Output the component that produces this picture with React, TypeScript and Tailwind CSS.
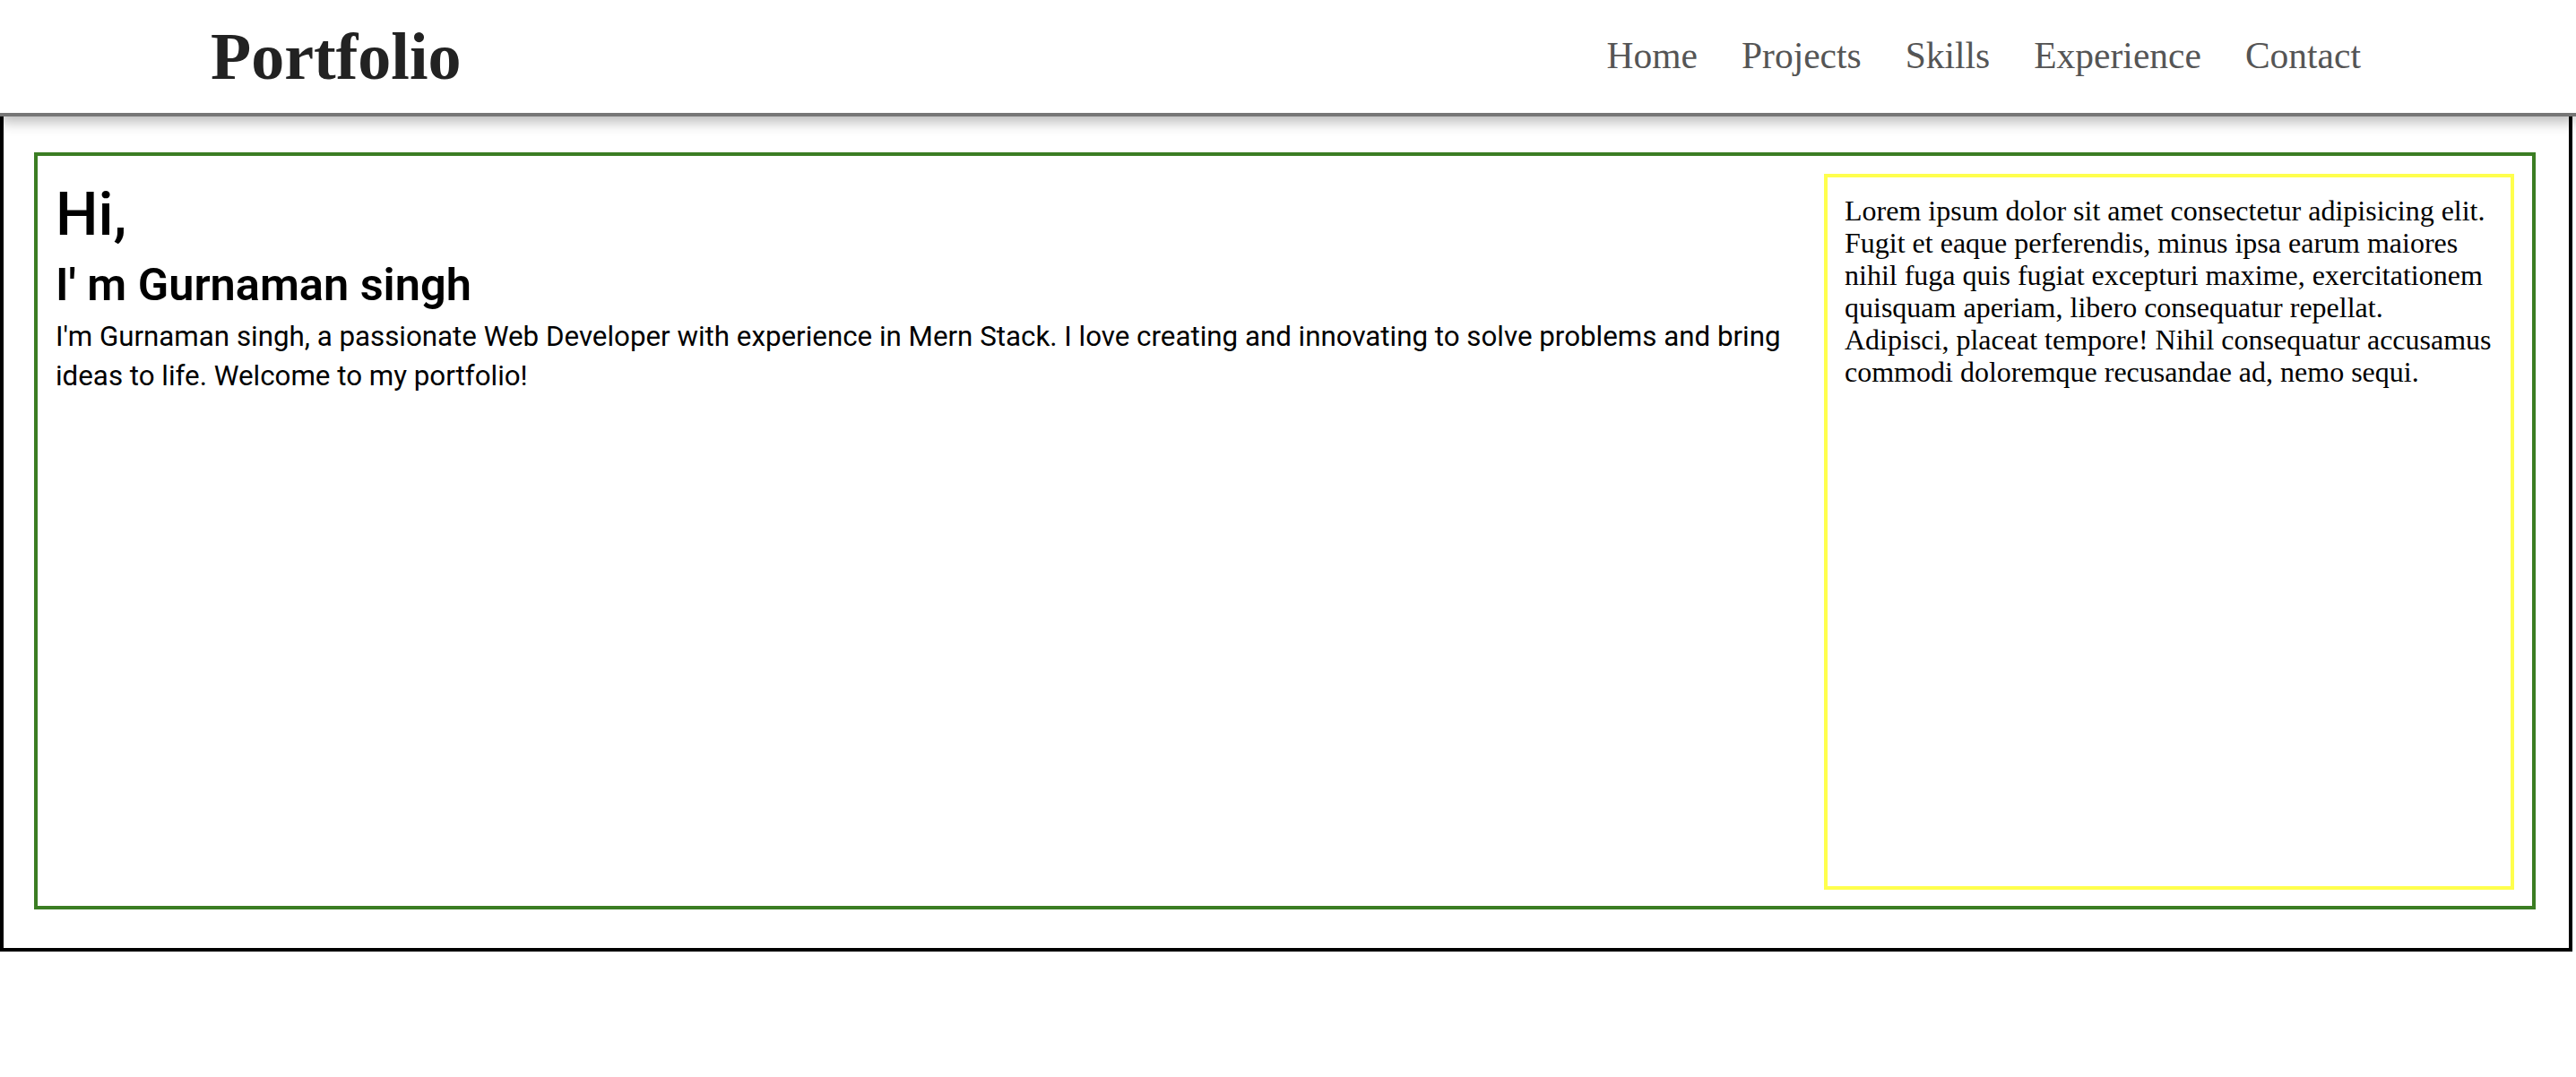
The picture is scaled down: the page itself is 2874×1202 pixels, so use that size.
import React from "react";

const navLinks = ["Home", "Projects", "Skills", "Experience", "Contact"];

const serif = "font-['Liberation_Serif','Times_New_Roman',serif]";
const sans = "font-['Roboto','Liberation_Sans',sans-serif]";

// wrapped to match the original line breaks
const loremLines = [
  "Lorem ipsum dolor sit amet consectetur adipisicing elit.",
  "Fugit et eaque perferendis, minus ipsa earum maiores",
  "nihil fuga quis fugiat excepturi maxime, exercitationem",
  "quisquam aperiam, libero consequatur repellat.",
  "Adipisci, placeat tempore! Nihil consequatur accusamus",
  "commodi doloremque recusandae ad, nemo sequi.",
];

export default function App() {
  return (
    <div className="min-h-[1202px] w-full bg-white">
      {/* Top bar */}
      <header className="relative z-10 flex h-[130px] items-center justify-between border-b-4 border-[#767676] bg-white pl-[235px] pr-[240px] shadow-[0_6px_14px_rgba(0,0,0,0.28)]">
        <h1 className={`${serif} text-[74px] font-bold leading-none text-[#222]`}>Portfolio</h1>
        <nav className={`${serif} flex gap-[49px] text-[41.5px] text-[#555]`}>
          {navLinks.map((link) => (
            <a key={link} href="#" className="leading-none">
              {link}
            </a>
          ))}
        </nav>
      </header>

      {/* Hero wrapper */}
      <section className="w-[2870px] border-x-4 border-b-4 border-black pl-[34px] pr-[37px] pt-[40px] pb-[43px]">
        <div className="flex h-[845px] items-start gap-[46px] border-4 border-[#3b7d23] p-5">
          {/* Intro */}
          <div className={`${sans} flex-1 text-black`}>
            <h2 className="mt-[5px] text-[67px] font-medium leading-[80px]">Hi,</h2>
            <h3 className="mt-[9px] text-[50.5px] font-semibold leading-[60px]">I' m Gurnaman singh</h3>
            <p className="mt-[6px] text-[31.3px] leading-[44px]">
              I'm Gurnaman singh, a passionate Web Developer with experience in Mern Stack. I love creating and
              innovating to solve problems and bring ideas to life. Welcome to my portfolio!
            </p>
          </div>

          {/* Side note */}
          <aside className={`${serif} h-[799px] w-[770px] shrink-0 border-4 border-[#ffff4d] px-[19px] pt-[19px] pb-4 text-[32px] leading-[36px] text-black`}>
            {loremLines.map((line) => (
              <span key={line} className="block whitespace-nowrap">
                {line}
              </span>
            ))}
          </aside>
        </div>
      </section>
    </div>
  );
}
